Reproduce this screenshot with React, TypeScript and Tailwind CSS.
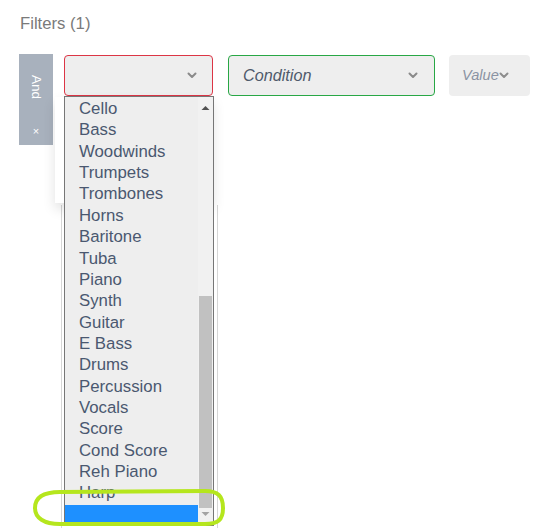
import React from "react";

const items = [
  "Cello",
  "Bass",
  "Woodwinds",
  "Trumpets",
  "Trombones",
  "Horns",
  "Baritone",
  "Tuba",
  "Piano",
  "Synth",
  "Guitar",
  "E Bass",
  "Drums",
  "Percussion",
  "Vocals",
  "Score",
  "Cond Score",
  "Reh Piano",
  "Harp",
];

function Chevron({ color = "#8a8a8a" }: { color?: string }) {
  return (
    <svg width="10" height="7" viewBox="0 0 10 7" className="shrink-0">
      <path d="M1.5 1.5 L5 5 L8.5 1.5" fill="none" stroke={color} strokeWidth="2" strokeLinecap="round" strokeLinejoin="round" />
    </svg>
  );
}

export default function App() {
  return (
    <div
      className="relative w-[552px] h-[528px] overflow-hidden bg-white"
      style={{ fontFamily: '"Liberation Sans", Arial, sans-serif' }}
    >
      <div className="pl-[20px] pt-[13px] text-[16.7px] leading-[22px] text-[#7a7a7a]">Filters (1)</div>

      <div className="flex items-start pl-[19px] mt-[19px]">
        <div className="flex flex-col w-[34px] h-[91px] bg-[#a8b1bd]">
          <div className="h-[64px] flex items-center justify-center pt-[2px]">
            <span className="text-white text-[13.5px] rotate-90 inline-block">And</span>
          </div>
          <div className="flex-1 flex items-center justify-center text-white text-[11px]">×</div>
        </div>
        <div className="ml-[11px] mt-[1px] w-[149px] h-[41px] rounded-[4px] border border-[#dc3545] bg-[#eeeeee] flex items-center justify-end pr-[15px]">
          <Chevron />
        </div>
        <div className="ml-[15px] mt-[1px] w-[207px] h-[41px] rounded-[4px] border border-[#28a745] bg-[#eeeeee] flex items-center justify-between pl-[14px] pr-[16px]">
          <span className="italic text-[16.2px] text-[#4f5a6b]">Condition</span>
          <Chevron />
        </div>
        <div className="ml-[14px] mt-[1px] w-[81px] h-[41px] rounded-[4px] bg-[#eeeeee] flex items-center pl-[13px]">
          <span className="italic text-[14.6px] text-[#8a93a3]">Value</span>
          <Chevron color="#8d8d8d" />
        </div>
      </div>

      {/* background content behind dropdown */}
      <div className="absolute left-[61px] top-[205px] w-[157px] h-[330px] border-x border-[#d6d6d6]"></div>
      <div className="absolute left-[55px] top-[97px] w-[158px] h-[106px] bg-white shadow-[0_6px_12px_rgba(0,0,0,0.12)]"></div>

      {/* dropdown list */}
      <div className="absolute left-[64px] top-[96px] w-[150px] h-[430px] border border-[#767676] bg-[#eeeeee] overflow-hidden flex">
        <div className="flex-1 flex flex-col pt-[1px]">
          {items.map((t) => (
            <div key={t} className="h-[21.37px] leading-[21.37px] pl-[14px] text-[16.8px] text-[#4a5870] whitespace-nowrap">
              {t}
            </div>
          ))}
          <div className="h-[19px] bg-[#1e90ff] mt-[1px]"></div>
        </div>
        <div className="w-[15px] bg-[#f1f1f1] flex flex-col items-center">
          <svg width="9" height="16" viewBox="0 0 9 16" className="mt-[3px] shrink-0">
            <path d="M0.5 10 L4.5 6 L8.5 10 Z" fill="#505050" />
          </svg>
          <div className="h-[180px] shrink-0"></div>
          <div className="w-[13px] h-[212px] bg-[#c1c1c1] shrink-0"></div>
          <svg width="9" height="12" viewBox="0 0 9 12" className="shrink-0">
            <path d="M0.5 4 L4.5 8 L8.5 4 Z" fill="#a3a3a3" />
          </svg>
        </div>
      </div>

      {/* annotation */}
      <svg className="absolute left-0 top-0 pointer-events-none" width="552" height="528">
        <path
          d="M60 492 L205 491 C218 491 223 496 223 508 C223 520 218 524 205 524 L60 524 C44 524 35 518 35 508 C35 497 44 492 60 492 Z"
          fill="none"
          stroke="#b5e61d"
          strokeWidth="4"
        />
      </svg>
    </div>
  );
}
